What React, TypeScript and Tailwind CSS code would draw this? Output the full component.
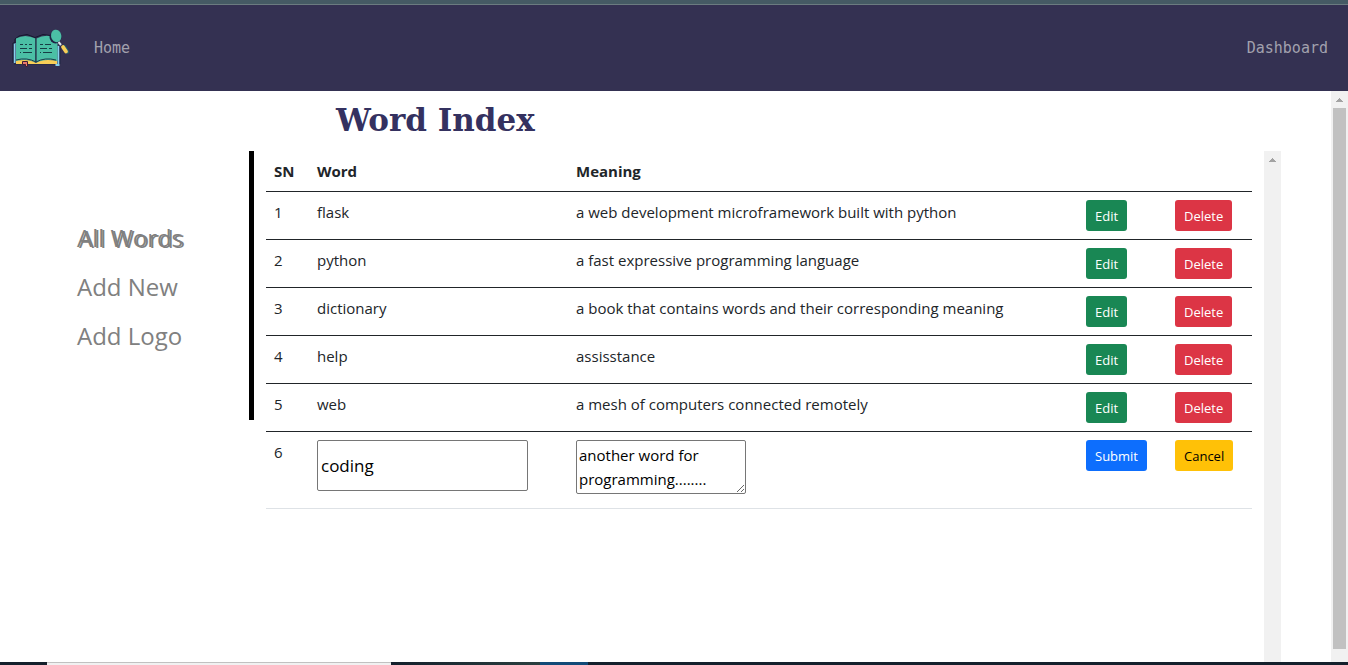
import { useState } from "react";
import clsx from "clsx";

type Entry = { sn: number; word: string; meaning: string };

const entries: Entry[] = [
  { sn: 1, word: "flask", meaning: "a web development microframework built with python" },
  { sn: 2, word: "python", meaning: "a fast expressive programming language" },
  { sn: 3, word: "dictionary", meaning: "a book that contains words and their corresponding meaning" },
  { sn: 4, word: "help", meaning: "assisstance" },
  { sn: 5, word: "web", meaning: "a mesh of computers connected remotely" },
];

function Logo() {
  return (
    <svg viewBox="12 27 58 42" className="h-[42px] w-[58px]" aria-hidden="true">
      <path d="M14.500 43v20M58.500 46v19h-3" fill="none" stroke="#86d0ee" strokeWidth="2" />
      <path d="M13 63V43h2v-4l4-3 8-1.500 8 3 8-3 7 1" fill="none" stroke="#15172e" strokeWidth="1" />
      <path d="M14 64h7m7 0h27M60 64V46" fill="none" stroke="#1f2743" strokeWidth="1" />
      <path d="M16 38.500q9-5 19.500 0v24q-9-4-19.500-1z" fill="#4bbfa5" />
      <path d="M36.500 38.500q9-5 21-.5v23q-11-2-21 2z" fill="#4bbfa5" />
      <path d="M16 61q12-3 20 2q8-5 21-2v3H16z" fill="#f8ce57" />
      <path d="M16 60q11-3 20 2q9-5 20-2M35.800 38v24" fill="none" stroke="#1e3a4a" strokeWidth="1" />
      <path d="M20 44.500h3m2 0h2m2 0h3M20 48.500h7m2 0h3M20 52.500h1m2 0h9M40 44.500h3m2 0h6M40 48.500h7m2 0h3M40 52.500h1m2 0h9" stroke="#173d45" strokeWidth="1" />
      <path d="M22.500 61.500h5v5h-2v-2h-3z" fill="#e9776d" stroke="#3a1f35" strokeWidth="1" />
      <ellipse cx="55.500" cy="37" rx="6" ry="6.500" fill="#1f2344" />
      <ellipse cx="56.200" cy="36" rx="5.200" ry="6.300" fill="#4bbfa5" transform="rotate(-12 56 36)" />
      <path d="m58.500 42 2.500 3" stroke="#dce5ee" strokeWidth="2" />
      <path d="m64 46.500 3.500 5.500" stroke="#236073" strokeWidth="3.500" strokeLinecap="round" />
      <path d="m63 47 3 4.500" stroke="#f8ce57" strokeWidth="3.800" strokeLinecap="round" />
    </svg>
  );
}

function ScrollTrack({ thumb }: { thumb?: boolean }) {
  return (
    <div aria-hidden="true" className="flex w-[17px] shrink-0 flex-col items-center bg-[#f1f1f1]">
      <div className="flex h-[17px] shrink-0 items-center">
        <svg viewBox="0 0 7 4" className="h-1 w-[7px]">
          <path d="M3 0h1v1h1v1h1v1h1v1H0V3h1V2h1V1h1z" fill="#a3a3a3" />
        </svg>
      </div>
      {thumb && <div className="mb-[13px] w-[13px] flex-1 bg-[#c1c1c1]" />}
    </div>
  );
}

function ActionButton({ label, tone }: { label: string; tone: string }) {
  return (
    <button type="button" className={clsx("block h-[31px] rounded-[3px] px-[9px] pt-px text-[13px] leading-[21px]", tone)}>
      {label}
    </button>
  );
}

export default function App() {
  const [word, setWord] = useState("coding");
  const [meaning, setMeaning] = useState("another word for programming........");

  return (
    <div className="flex h-screen flex-col overflow-hidden bg-white font-['Open_Sans','Noto_Sans',sans-serif] text-[15px] leading-6 text-[#212529]">
      <div className="h-[5px] shrink-0 border-b border-[#6b7b80] bg-[#455a64]" />
      <nav className="flex h-[86px] shrink-0 items-center bg-[#343152] pr-5 pl-3 font-['DejaVu_Sans_Mono',monospace] text-[15px] text-[#a2a1ae]">
        <a href="#home" aria-label="Word Index home">
          <Logo />
        </a>
        <a href="#home" className="ml-6">Home</a>
        <a href="#dashboard" className="ml-auto">Dashboard</a>
      </nav>

      <div className="flex min-h-0 flex-1">
        <div className="flex min-w-0 flex-1 flex-col pr-[50px]">
          <h1 className="h-[60px] shrink-0 pl-[336px] font-['DejaVu_Serif','Liberation_Serif',serif] text-[31px] leading-[58px] font-bold text-[#343160]">
            Word Index
          </h1>
          <main className="flex min-h-0 flex-1">
            <aside className="h-[269px] w-[254px] shrink-0 border-r-[5px] border-black pt-[62px] pl-[77px] text-2xl leading-[49px] text-[#808080]">
              <ul>
                <li><a href="#words" className="[text-shadow:2px_1px_0_#808080]">All Words</a></li>
                <li><a href="#new">Add New</a></li>
                <li><a href="#logo">Add Logo</a></li>
              </ul>
            </aside>
            <section className="min-w-0 flex-1 px-3">
              <table className="w-full table-fixed border-collapse text-left [&_td]:px-2 [&_td]:py-2 [&_td]:align-top [&_th]:p-2">
                <colgroup>
                  <col className="w-[43px]" />
                  <col className="w-[259px]" />
                  <col />
                  <col className="w-[89px]" />
                  <col className="w-[85px]" />
                </colgroup>
                <thead>
                  <tr className="border-b border-[#212529]">
                    <th scope="col">SN</th>
                    <th scope="col">Word</th>
                    <th scope="col">Meaning</th>
                    <td />
                    <td />
                  </tr>
                </thead>
                <tbody>
                  {entries.map((e) => (
                    <tr key={e.sn} className="h-12 border-b border-[#212529]">
                      <td>{e.sn}</td>
                      <td>{e.word}</td>
                      <td>{e.meaning}</td>
                      <td><ActionButton label="Edit" tone="bg-[#198754] text-white" /></td>
                      <td><ActionButton label="Delete" tone="bg-[#dc3545] text-white" /></td>
                    </tr>
                  ))}
                  <tr className="h-[77px] border-b border-[#dee2e6]">
                    <td>6</td>
                    <td>
                      <input
                        aria-label="Word"
                        value={word}
                        onChange={(e) => setWord(e.target.value)}
                        className="block h-[51px] w-[211px] rounded-xs border border-[#767676] px-[3px] text-[17px] text-black"
                      />
                    </td>
                    <td>
                      <textarea
                        aria-label="Meaning"
                        value={meaning}
                        onChange={(e) => setMeaning(e.target.value)}
                        className="block h-[54px] w-[170px] overflow-hidden rounded-xs border border-[#767676] p-0.5 text-black"
                      />
                    </td>
                    <td><ActionButton label="Submit" tone="bg-[#0d6efd] text-white" /></td>
                    <td><ActionButton label="Cancel" tone="bg-[#ffc107] text-black" /></td>
                  </tr>
                </tbody>
              </table>
            </section>
            <ScrollTrack />
          </main>
        </div>
        <ScrollTrack thumb />
      </div>

      <div aria-hidden="true" className="flex h-[3px] shrink-0 bg-[#14202c]">
        <div className="ml-[47px] w-[344px] border-t border-[#c1c1c1] bg-[#f1f1f1]" />
        <div className="w-[149px] bg-linear-to-r from-[#14202c] to-[#2a3f3f]" />
        <div className="w-12 bg-[#124a78]" />
      </div>
    </div>
  );
}
